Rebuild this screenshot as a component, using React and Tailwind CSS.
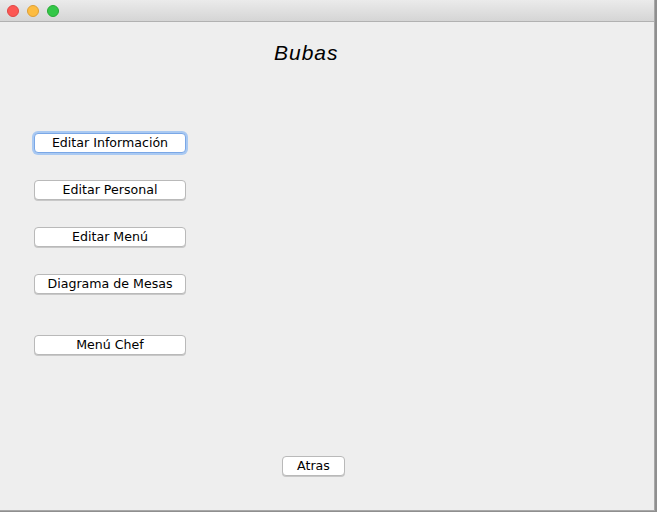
import React from "react";

const font = { fontFamily: '"Lucida Grande", "DejaVu Sans", "Liberation Sans", sans-serif' };

function Btn({ children, className = "", focused = false }) {
  return (
    <div
      className={
        "h-[20px] flex items-center justify-center bg-white rounded-[4px] text-[12.6px] text-black leading-none " +
        (focused
          ? "border border-[#7aa7e6] shadow-[0_0_0_2px_#a9c9f2] "
          : "border border-[#b9b9b9] shadow-[0_1px_0_#c8c8c8] ") +
        className
      }
      style={font}
    >
      {children}
    </div>
  );
}

export default function App() {
  return (
    <div className="w-[657px] h-[512px] bg-[#8f8f8f] flex overflow-hidden">
      <div className="w-[655px] h-[511px] flex flex-col bg-[#eeeeee] border-r border-b border-[#a8a8a8]">
        <div className="h-[22px] shrink-0 flex items-center gap-[8px] pl-[7px] bg-gradient-to-b from-[#ebebeb] to-[#d5d5d5] border-b border-[#b1b1b1]">
          <div className="w-[12px] h-[12px] rounded-full bg-[#fc5753] border border-[#df4744]" />
          <div className="w-[12px] h-[12px] rounded-full bg-[#fdbc40] border border-[#de9f34]" />
          <div className="w-[12px] h-[12px] rounded-full bg-[#33c748] border border-[#27aa35]" />
        </div>
        <div className="flex-1 flex flex-col">
          <div
            className="mt-[18px] pl-[274px] text-[21px] italic leading-[25px] tracking-[1px] text-black"
            style={{ fontFamily: '"Liberation Sans", Arial, sans-serif' }}
          >
            Bubas
          </div>
          <div className="pl-[34px] flex flex-col">
            <Btn focused className="w-[152px] mt-[68px]">Editar Información</Btn>
            <Btn className="w-[152px] mt-[27px]">Editar Personal</Btn>
            <Btn className="w-[152px] mt-[27px]">Editar Menú</Btn>
            <Btn className="w-[152px] mt-[27px]">Diagrama de Mesas</Btn>
            <Btn className="w-[152px] mt-[41px]">Menú Chef</Btn>
          </div>
          <div className="pl-[282px] mt-[101px]">
            <Btn className="w-[63px]">Atras</Btn>
          </div>
        </div>
      </div>
    </div>
  );
}
